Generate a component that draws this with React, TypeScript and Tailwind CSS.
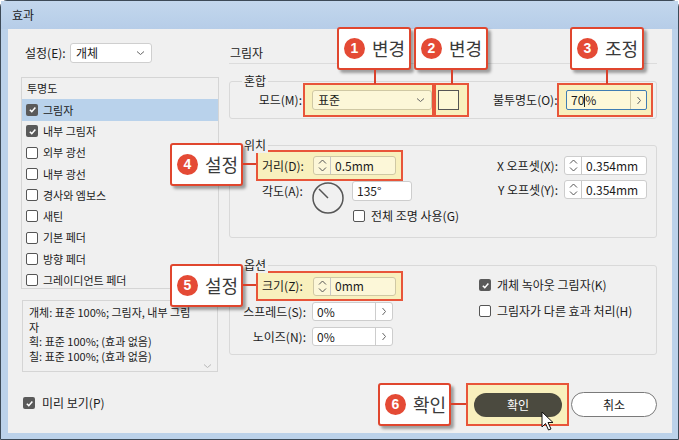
import React from "react";

function ChevDown() {
  return (
    <svg width="9" height="6" viewBox="0 0 9 6">
      <path d="M1 1.5 L4.5 4.5 L8 1.5" fill="none" stroke="#666" strokeWidth="1" />
    </svg>
  );
}

function ChevRight() {
  return (
    <svg width="6" height="9" viewBox="0 0 6 9">
      <path d="M1.5 1 L4.5 4.5 L1.5 8" fill="none" stroke="#666" strokeWidth="1" />
    </svg>
  );
}

function Check({ checked }: { checked?: boolean }) {
  if (checked)
    return (
      <span className="flex h-[12px] w-[12px] shrink-0 items-center justify-center rounded-[2px] bg-[#5a5a5a]">
        <svg width="9" height="9" viewBox="0 0 10 10">
          <path d="M2 5.2 L4.2 7.4 L8.2 2.8" fill="none" stroke="white" strokeWidth="1.7" />
        </svg>
      </span>
    );
  return <span className="h-[12px] w-[12px] shrink-0 rounded-[2px] border border-[#555] bg-white" />;
}

function Spin() {
  return (
    <span className="flex h-full w-[17px] shrink-0 flex-col items-center justify-center gap-[3px] border-r border-[#c8c8c8]">
      <svg width="9" height="5" viewBox="0 0 9 5">
        <path d="M1 4.5 L4.5 1 L8 4.5" fill="none" stroke="#555" strokeWidth="1" />
      </svg>
      <svg width="9" height="5" viewBox="0 0 9 5">
        <path d="M1 0.5 L4.5 4 L8 0.5" fill="none" stroke="#555" strokeWidth="1" />
      </svg>
    </span>
  );
}

function SpinInput({ value, tinted }: { value: string; tinted?: boolean }) {
  return (
    <div
      className={
        tinted
          ? "flex h-[19px] w-[83px] items-center rounded-[3px] border border-[#cfc8a4] bg-[#fcf7d8]"
          : "flex h-[19px] w-[83px] items-center rounded-[3px] border border-[#cdcdcd] bg-white"
      }
    >
      <Spin />
      <span className="pl-[4px] text-[12px]">{value}</span>
    </div>
  );
}

function ArrowInput({ value }: { value: string }) {
  return (
    <div className="flex h-[19px] w-[81px] items-center rounded-[3px] border border-[#cdcdcd] bg-white">
      <span className="flex-1 pl-[4px] text-[12px]">{value}</span>
      <span className="flex h-full w-[17px] items-center justify-center border-l border-[#cdcdcd]">
        <ChevRight />
      </span>
    </div>
  );
}

function Callout({ n, text, className }: { n: string; text: string; className: string }) {
  return (
    <div
      className={`absolute flex h-[43px] items-center gap-[7px] rounded-[3px] border-2 border-[#e0462e] bg-white pl-[5px] shadow-[3px_3px_3px_rgba(0,0,0,0.35)] ${className}`}
    >
      <span className="flex h-[21px] w-[21px] items-center justify-center rounded-full bg-[#e44a35] font-['Liberation_Sans',sans-serif] text-[14px] font-bold text-white">
        {n}
      </span>
      <span className="text-[18px] font-normal text-[#3a3a3a]">{text}</span>
    </div>
  );
}

const effects = ["외부 광선", "내부 광선", "경사와 엠보스", "새틴", "기본 페더", "방향 페더", "그레이디언트 페더"];

export default function App() {
  return (
    <div className="relative h-[440px] w-[679px] overflow-hidden font-['Noto_Sans_CJK_KR',sans-serif] text-[#1b1b1b]">
      <div className="flex h-full w-full flex-col rounded-t-[7px] border border-[#3d4a57] bg-[#bcd2ea]">
        <div className="flex h-[28px] shrink-0 items-center bg-linear-to-b from-[#c3d7ed] to-[#b6cde8] pl-[11px] text-[12px]">
          효과
        </div>

        <div className="ml-[7px] flex h-[404px] w-[664px] bg-[#f0f0f0]">
          {/* left column */}
          <div className="ml-[13px] flex w-[198px] flex-col">
            <div className="mt-[14px] flex h-[20px] items-center">
              <span className="ml-[4px] w-[45px] text-[12px]">설정(E):</span>
              <div className="flex h-[20px] w-[82px] items-center justify-between rounded-[3px] border border-[#cfcfcf] bg-white pl-[5px] pr-[6px] text-[12px]">
                개체
                <ChevDown />
              </div>
            </div>

            <div className="mt-[14px] h-[212px] overflow-hidden border border-[#d5d5d5]">
              <div className="flex h-[21.3px] items-center pl-[5px] text-[11px]">투명도</div>
              <div className="flex h-[21.3px] items-center gap-[5px] bg-[#b9d2eb] pl-[4px] text-[11px]">
                <Check checked />
                그림자
              </div>
              <div className="flex h-[21.3px] items-center gap-[5px] pl-[4px] text-[11px]">
                <Check checked />
                내부 그림자
              </div>
              {effects.map((e) => (
                <div key={e} className="flex h-[21.3px] items-center gap-[5px] pl-[4px] text-[11px]">
                  <Check />
                  {e}
                </div>
              ))}
            </div>

            <div className="mt-[11px] ml-[1px] flex h-[72px] w-[196px] flex-col border border-[#d5d5d5] pl-[6px] pt-[4px] text-[11px] leading-[14.5px]">
              <div>개체: 표준 100%; 그림자, 내부 그림</div>
              <div>자</div>
              <div>획: 표준 100%; (효과 없음)</div>
              <div>칠: 표준 100%; (효과 없음)</div>
              <div className="mt-auto mb-[2px] mr-[5px] self-end opacity-40">
                <ChevDown />
              </div>
            </div>

            <div className="mt-[24px] ml-[2px] flex h-[14px] items-center gap-[7px] text-[12px]">
              <Check checked />
              미리 보기(P)
            </div>
          </div>

          {/* right column */}
          <div className="ml-[10px] flex w-[428px] flex-col">
            <div className="mt-[16px] h-[16px] pl-[1px] text-[12px] leading-[16px]">그림자</div>
            <div className="mt-[2px] h-px bg-[#dcdcdc]" />

            {/* 혼합 */}
            <div className="relative mt-[17px] flex h-[38px] items-center rounded-[3px] border border-[#d9d9d9]">
              <span className="absolute -top-[9px] left-[12px] bg-[#f0f0f0] px-[2px] text-[12px] leading-[16px]">혼합</span>
              <span className="w-[73px] pr-[1px] text-right text-[12px]">모드(M):</span>
              <div className="flex h-[34px] w-[131px] items-center border-2 border-[#e8553a] bg-[#f8f0bd] pl-[7px]">
                <div className="flex h-[20px] w-[120px] items-center justify-between rounded-[3px] border border-[#cfc8a4] bg-[#fcf7d8] pl-[5px] pr-[6px] text-[12px]">
                  표준
                  <ChevDown />
                </div>
              </div>
              <div className="flex h-[34px] w-[35px] items-center border-2 border-[#e8553a] bg-[#f8f0bd] pl-[2px]">
                <div className="h-[20px] w-[21px] border border-[#555] bg-[#fdf8d6]" />
              </div>
              <span className="ml-[24px] w-[64px] whitespace-nowrap text-[12px]">불투명도(O):</span>
              <div className="flex h-[34px] w-[96px] items-center border-2 border-[#e8553a] bg-[#f8f0bd] pl-[7px]">
                <div className="flex h-[20px] w-[81px] items-center rounded-[2px] border border-[#3f7db3] bg-[#fdf8d8]">
                  <span className="flex flex-1 items-center pl-[4px] text-[12px]">
                    70
                    <span className="h-[13px] w-px bg-[#222]" />%
                  </span>
                  <span className="flex h-full w-[16px] items-center justify-center border-l border-[#cfc8a4]">
                    <ChevRight />
                  </span>
                </div>
              </div>
            </div>

            {/* 위치 */}
            <div className="relative mt-[26px] flex h-[93px] rounded-[3px] border border-[#d9d9d9]">
              <span className="absolute -top-[9px] left-[12px] bg-[#f0f0f0] px-[2px] text-[12px] leading-[16px]">위치</span>
              <div className="ml-[26px] mt-[4px] flex flex-col">
                <div className="flex h-[31px] w-[147px] items-center border-2 border-[#e8553a] bg-[#f8f0bd] pl-[4px]">
                  <span className="w-[51px] text-[12px]">거리(D):</span>
                  <SpinInput value="0.5mm" tinted />
                </div>
                <div className="flex h-[28px] items-start">
                  <span className="ml-[6px] mt-[2px] w-[49px] text-[12px] leading-[16px]">각도(A):</span>
                  <svg width="34" height="34" viewBox="0 0 34 34" className="shrink-0">
                    <circle cx="17" cy="17" r="15" fill="none" stroke="#555" strokeWidth="1.5" />
                    <line x1="17" y1="17" x2="8" y2="8" stroke="#555" strokeWidth="1.5" />
                  </svg>
                  <div className="ml-[7px] flex h-[20px] w-[60px] items-center rounded-[3px] border border-[#cdcdcd] bg-white pl-[4px] text-[12px]">
                    135°
                  </div>
                </div>
                <div className="ml-[97px] flex h-[14px] items-center gap-[6px] text-[12px]">
                  <Check />
                  전체 조명 사용(G)
                </div>
              </div>
              <div className="ml-auto mr-[9px] mt-[10px] flex flex-col gap-[5px]">
                <div className="flex h-[19px] items-center justify-end">
                  <span className="mr-[6px] text-[12px]">X 오프셋(X):</span>
                  <SpinInput value="0.354mm" />
                </div>
                <div className="flex h-[19px] items-center justify-end">
                  <span className="mr-[6px] text-[12px]">Y 오프셋(Y):</span>
                  <SpinInput value="0.354mm" />
                </div>
              </div>
            </div>

            {/* 옵션 */}
            <div className="relative mt-[27px] flex h-[90px] rounded-[3px] border border-[#d9d9d9]">
              <span className="absolute -top-[9px] left-[12px] bg-[#f0f0f0] px-[2px] text-[12px] leading-[16px]">옵션</span>
              <div className="ml-[26px] mt-[5px] flex w-[147px] flex-col">
                <div className="flex h-[30px] w-[147px] items-center border-2 border-[#e8553a] bg-[#f8f0bd] pl-[4px]">
                  <span className="w-[51px] text-[12px]">크기(Z):</span>
                  <SpinInput value="0mm" tinted />
                </div>
                <div className="-ml-[26px] mt-[1px] flex h-[19px] items-center">
                  <span className="w-[76px] whitespace-nowrap text-right text-[12px]">스프레드(S):</span>
                  <div className="ml-[6px]">
                    <ArrowInput value="0%" />
                  </div>
                </div>
                <div className="-ml-[26px] mt-[6px] flex h-[19px] items-center">
                  <span className="w-[76px] whitespace-nowrap text-right text-[12px]">노이즈(N):</span>
                  <div className="ml-[6px]">
                    <ArrowInput value="0%" />
                  </div>
                </div>
              </div>
              <div className="ml-[76px] mt-[12px] flex flex-col gap-[12px]">
                <div className="flex h-[14px] items-center gap-[6px] text-[12px]">
                  <Check checked />
                  개체 녹아웃 그림자(K)
                </div>
                <div className="flex h-[14px] items-center gap-[6px] text-[12px]">
                  <Check />
                  그림자가 다른 효과 처리(H)
                </div>
              </div>
            </div>

            {/* buttons */}
            <div className="mt-[28px] flex h-[43px] items-center justify-end">
              <div className="flex h-[43px] w-[103px] items-center border-2 border-[#e8553a] bg-[#f8f0bd] pl-[6px]">
                <button className="flex h-[24px] w-[88px] items-center justify-center rounded-full bg-[#4b4a3f] text-[12px] text-white">
                  확인
                </button>
              </div>
              <button className="ml-[2px] flex h-[25px] w-[86px] items-center justify-center rounded-full border border-[#7a7a7a] bg-white text-[12px]">
                취소
              </button>
            </div>
          </div>
        </div>
      </div>

      {/* annotation callouts */}
      <Callout n="1" text="변경" className="left-[337px] top-[27px] w-[74px]" />
      <div className="absolute left-[374px] top-[70px] h-[14px] w-[2px] bg-[#d9412b]" />
      <Callout n="2" text="변경" className="left-[414px] top-[27px] w-[74px]" />
      <div className="absolute left-[451px] top-[70px] h-[14px] w-[2px] bg-[#d9412b]" />
      <Callout n="3" text="조정" className="left-[570px] top-[27px] w-[74px]" />
      <div className="absolute left-[606px] top-[70px] h-[14px] w-[2px] bg-[#d9412b]" />
      <Callout n="4" text="설정" className="left-[170px] top-[143px] w-[73px]" />
      <div className="absolute left-[243px] top-[163px] h-[2px] w-[13px] bg-[#d9412b]" />
      <Callout n="5" text="설정" className="left-[170px] top-[264px] w-[73px]" />
      <div className="absolute left-[243px] top-[284px] h-[2px] w-[13px] bg-[#d9412b]" />
      <Callout n="6" text="확인" className="left-[378px] top-[383px] w-[73px]" />
      <div className="absolute left-[451px] top-[403px] h-[2px] w-[15px] bg-[#d9412b]" />

      {/* mouse cursor */}
      <svg className="absolute left-[541px] top-[411px]" width="14" height="21" viewBox="0 0 14 21">
        <path d="M1 1 L1 16 L4.5 12.5 L7.5 19 L10 18 L7 11.5 L12 11.5 Z" fill="white" stroke="#111" strokeWidth="1" />
      </svg>
    </div>
  );
}
